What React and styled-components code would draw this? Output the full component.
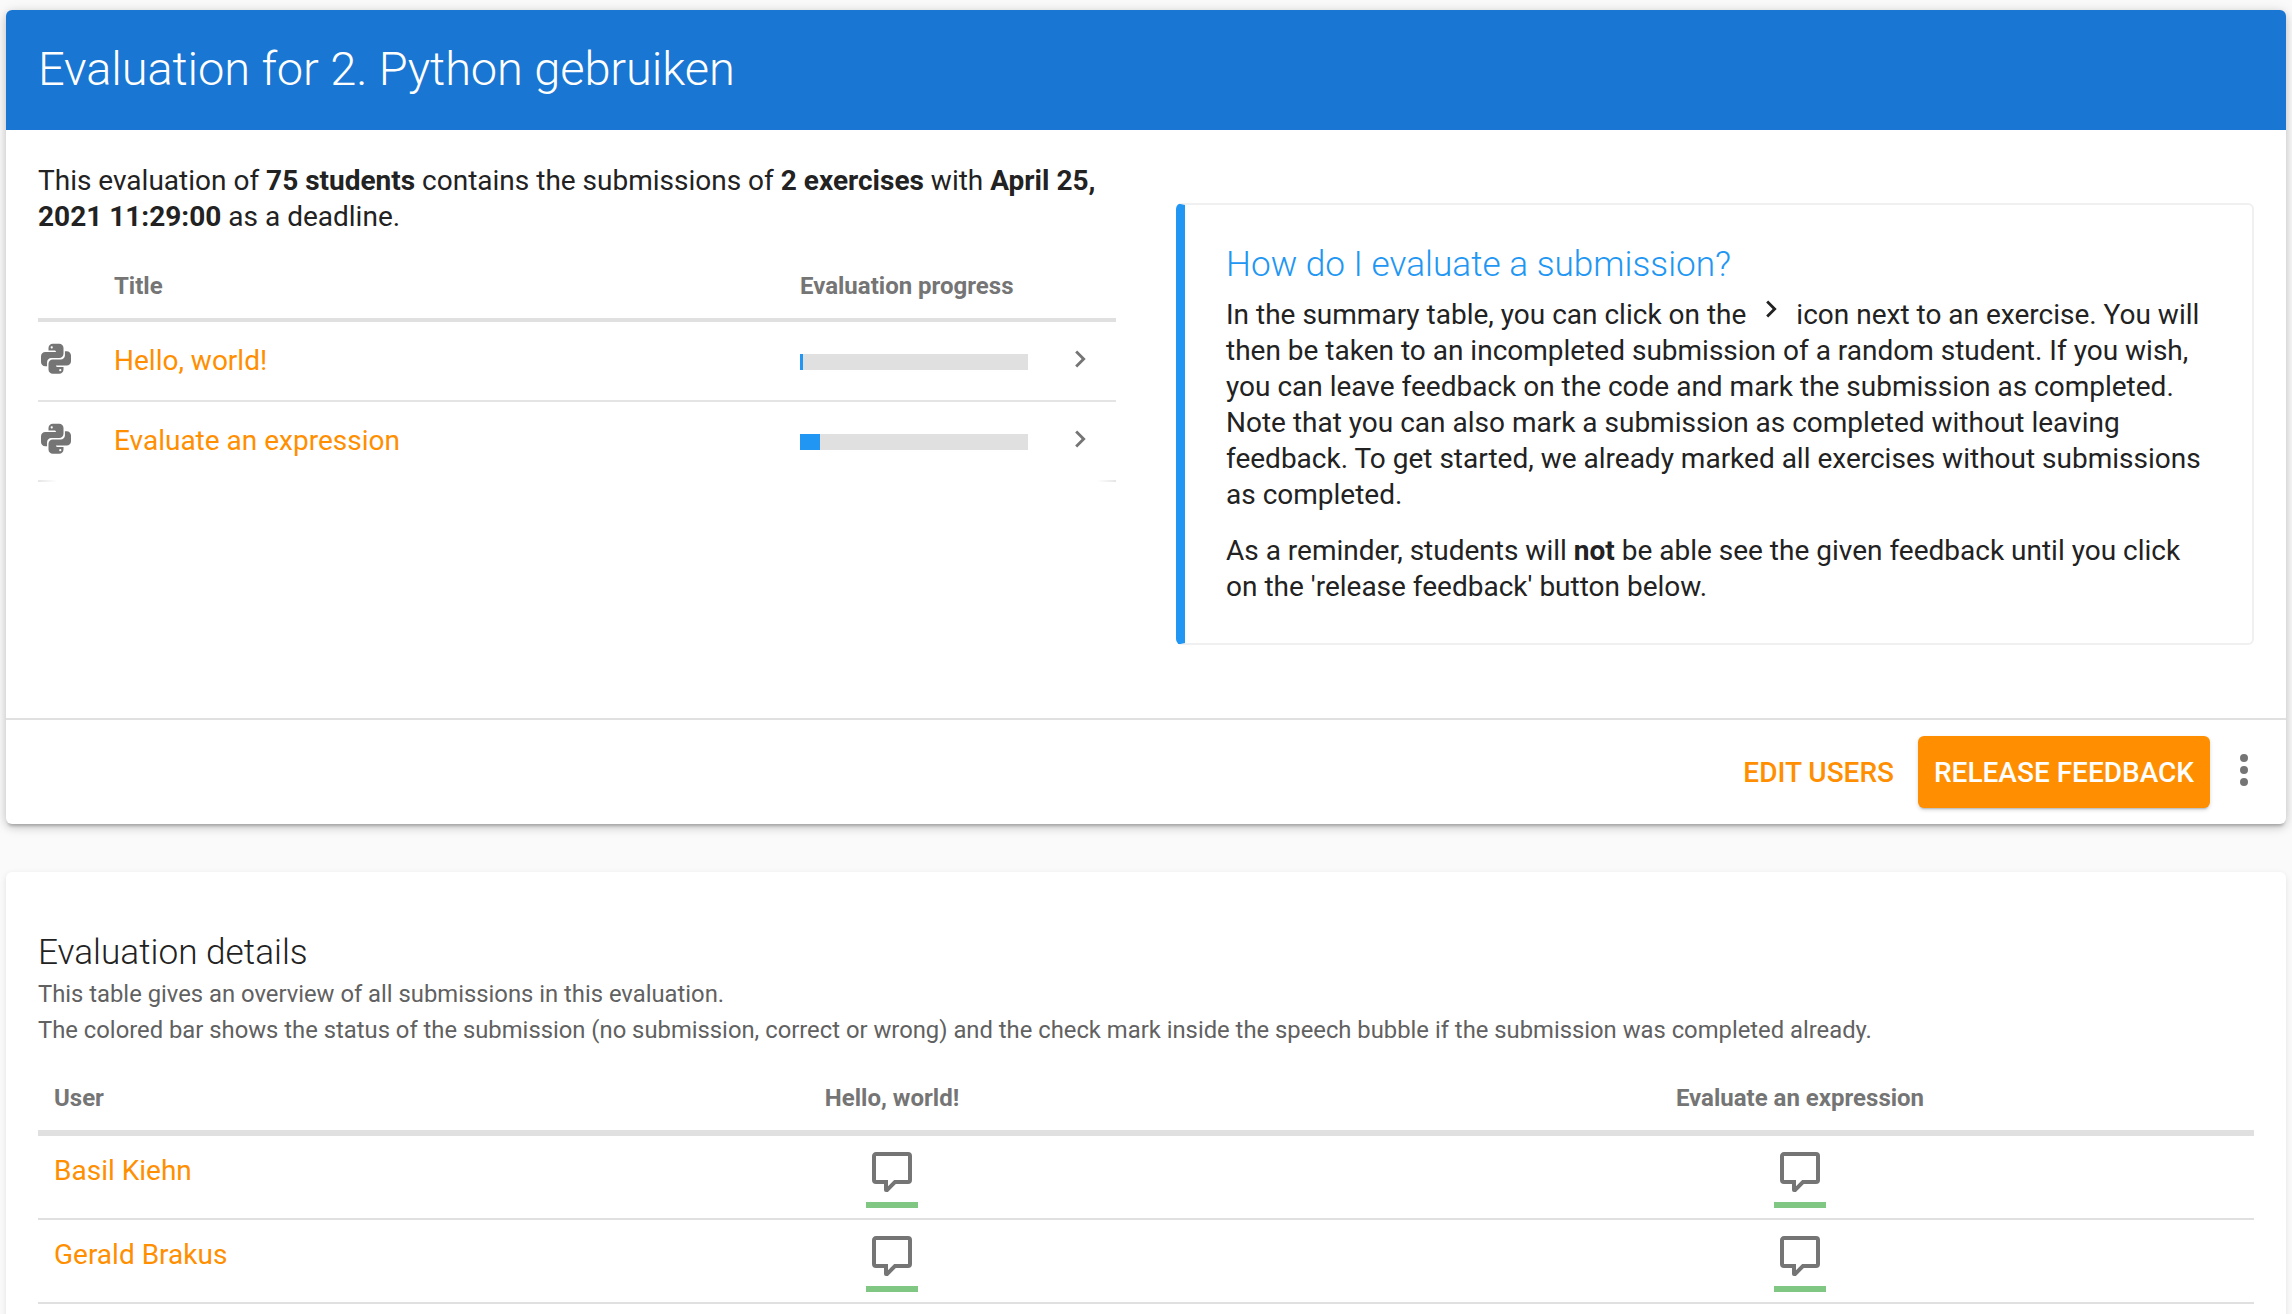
import React from 'react';
import styled, { createGlobalStyle } from 'styled-components';

const PYTHON =
  'M19.14,7.5A2.86,2.86 0 0,1 22,10.36V14.14A2.86,2.86 0 0,1 19.14,17H12C12,17.39 12.32,17.96 12.71,17.96H17V19.64A2.86,2.86 0 0,1 14.14,22.5H9.86A2.86,2.86 0 0,1 7,19.64V15.89C7,14.31 8.28,13.04 9.86,13.04H15.11C16.69,13.04 17.96,11.76 17.96,10.18V7.5H19.14M14.86,19.29C14.46,19.29 14.14,19.59 14.14,20.18C14.14,20.77 14.46,20.89 14.86,20.89A0.71,0.71 0 0,0 15.57,20.18C15.57,19.59 15.25,19.29 14.86,19.29M4.86,17.5C3.28,17.5 2,16.22 2,14.64V10.86C2,9.28 3.28,8 4.86,8H12C12,7.61 11.68,7.04 11.29,7.04H7V5.36C7,3.78 8.28,2.5 9.86,2.5H14.14C15.72,2.5 17,3.78 17,5.36V9.11C17,10.69 15.72,11.96 14.14,11.96H8.89C7.31,11.96 6.04,13.24 6.04,14.82V17.5H4.86M9.14,5.71C9.54,5.71 9.86,5.41 9.86,4.82C9.86,4.23 9.54,4.11 9.14,4.11C8.75,4.11 8.43,4.23 8.43,4.82C8.43,5.41 8.75,5.71 9.14,5.71Z';
const COMMENT =
  'M9,22A1,1 0 0,1 8,21V18H4A2,2 0 0,1 2,16V4C2,2.89 2.9,2 4,2H20A2,2 0 0,1 22,4V16A2,2 0 0,1 20,18H13.9L10.2,21.71C10,21.9 9.75,22 9.5,22V22H9M10,16V19.08L13.08,16H20V4H4V16H10Z';
const CHEVRON = 'M8.59,16.58L13.17,12L8.59,7.41L10,6L16,12L10,18L8.59,16.58Z';
const DOTS =
  'M12,16A2,2 0 0,1 14,18A2,2 0 0,1 12,20A2,2 0 0,1 10,18A2,2 0 0,1 12,16M12,10A2,2 0 0,1 14,12A2,2 0 0,1 12,14A2,2 0 0,1 10,12A2,2 0 0,1 12,10M12,4A2,2 0 0,1 14,6A2,2 0 0,1 12,8A2,2 0 0,1 10,6A2,2 0 0,1 12,4Z';

const Icon = ({ path, size, color, className }) => (
  <svg className={className} width={size} height={size} viewBox="0 0 24 24" fill={color}>
    <path d={path} />
  </svg>
);

const exercises = [
  { title: 'Hello, world!', progress: 3 },
  { title: 'Evaluate an expression', progress: 20 },
];
const users = ['Basil Kiehn', 'Gerald Brakus'];

const App = () => {
  return (
    <>
      <GlobalStyle />
      <Page>
        <Card>
          <Header>Evaluation for 2. Python gebruiken</Header>
          <Body>
            <div>
              <Intro>
                This evaluation of <b>75 students</b> contains the submissions of{' '}
                <b>2 exercises</b> with <b>April 25, 2021 11:29:00</b> as a deadline.
              </Intro>
              <SummaryHead>
                <span />
                <span>Title</span>
                <span>Evaluation progress</span>
              </SummaryHead>
              {exercises.map((ex) => (
                <SummaryRow key={ex.title}>
                  <PythonIcon path={PYTHON} size={36} color="#757575" />
                  <ExerciseLink>{ex.title}</ExerciseLink>
                  <ProgressTrack>
                    <ProgressFill style={{ width: ex.progress }} />
                  </ProgressTrack>
                  <RowChevron path={CHEVRON} size={34} color="#757575" />
                </SummaryRow>
              ))}
            </div>
            <Callout>
              <CalloutTitle>How do I evaluate a submission?</CalloutTitle>
              <CalloutText>
                In the summary table, you can click on the
                <InlineChevron path={CHEVRON} size={34} color="#222222" />
                icon next to an exercise. You will then be taken to an incompleted submission of a
                random student. If you wish, you can leave feedback on the code and mark the
                submission as completed. Note that you can also mark a submission as completed
                without leaving feedback. To get started, we already marked all exercises without
                submissions as completed.
              </CalloutText>
              <CalloutText>
                As a reminder, students will <b>not</b> be able see the given feedback until you
                click on the 'release feedback' button below.
              </CalloutText>
            </Callout>
          </Body>
          <Actions>
            <TextButton>Edit users</TextButton>
            <PrimaryButton>Release feedback</PrimaryButton>
            <MenuIcon path={DOTS} size={48} color="#757575" />
          </Actions>
        </Card>
        <DetailsCard>
          <DetailsTitle>Evaluation details</DetailsTitle>
          <DetailsText>This table gives an overview of all submissions in this evaluation.</DetailsText>
          <DetailsText>
            The colored bar shows the status of the submission (no submission, correct or wrong) and
            the check mark inside the speech bubble if the submission was completed already.
          </DetailsText>
          <DetailsHead>
            <UserHeading>User</UserHeading>
            <span>Hello, world!</span>
            <span>Evaluate an expression</span>
          </DetailsHead>
          {users.map((user) => (
            <DetailsRow key={user}>
              <UserLink>{user}</UserLink>
              {exercises.map((ex) => (
                <StatusCell key={ex.title}>
                  <Icon path={COMMENT} size={48} color="#757575" />
                  <StatusBar />
                </StatusCell>
              ))}
            </DetailsRow>
          ))}
        </DetailsCard>
      </Page>
    </>
  );
};

const GlobalStyle = createGlobalStyle`
  html, body {
    margin: 0;
    height: 1314px;
    overflow: hidden;
    background: #fafafa;
  }
  body {
    font-family: Roboto, 'Liberation Sans', sans-serif;
    color: #222222;
  }
`;
const Page = styled.div`
  padding: 10px 6px 0;
  display: flex;
  flex-direction: column;
  gap: 48px;
`;
const Card = styled.section`
  background: #fff;
  border-radius: 6px;
  overflow: hidden;
  box-shadow: 0 4px 3px -2px rgba(0, 0, 0, 0.2), 0 3px 8px rgba(0, 0, 0, 0.14), 0 2px 14px rgba(0, 0, 0, 0.12);
`;
const Header = styled.h1`
  margin: 0;
  height: 120px;
  padding: 0 32px 3px;
  box-sizing: border-box;
  display: flex;
  align-items: center;
  background: #1976d2;
  color: #fff;
  font-size: 47px;
  font-weight: 300;
  letter-spacing: -0.1px;
`;
const Body = styled.div`
  display: grid;
  grid-template-columns: 1078px 1078px;
  gap: 60px;
  padding: 32px 32px 73px;
  border-bottom: 2px solid #e0e0e0;
`;
const Intro = styled.p`
  margin: 1px 0 19px;
  font-size: 28px;
  line-height: 36px;
  height: 72px;
`;
const SummaryHead = styled.div`
  display: grid;
  grid-template-columns: 76px 686px 1fr;
  align-items: center;
  height: 64px;
  border-bottom: 4px solid #e0e0e0;
  color: #757575;
  font-size: 24px;
  font-weight: 700;
`;
/* last row only shows the rule at its two ends, fading towards the middle */
const SummaryRow = styled.div`
  display: grid;
  grid-template-columns: 76px 686px 228px 1fr;
  align-items: center;
  height: 78px;
  border-bottom: 2px solid #e4e4e4;
  &:last-child {
    border-image: linear-gradient(90deg, #e4e4e4, #fff 20px, #fff calc(100% - 20px), #e4e4e4) 1;
  }
`;
const PythonIcon = styled(Icon)`
  margin-top: -6px;
`;
const ExerciseLink = styled.a`
  margin-top: -2px;
  color: #ff8f00;
  font-size: 28px;
`;
const ProgressTrack = styled.div`
  height: 16px;
  margin-top: 2px;
  background: #e0e0e0;
`;
const ProgressFill = styled.div`
  height: 100%;
  background: #2196f3;
`;
const RowChevron = styled(Icon)`
  margin: -4px 0 0 35px;
`;
const Callout = styled.aside`
  margin-top: 41px;
  height: 442px;
  box-sizing: border-box;
  padding: 35px 40px 0 41px;
  border: 2px solid #f0f0f0;
  border-left: 9px solid #2196f3;
  border-radius: 6px;
`;
const CalloutTitle = styled.h2`
  margin: 0 0 4px;
  color: #2196f3;
  font-size: 35.2px;
  font-weight: 300;
  line-height: 48px;
`;
const CalloutText = styled.p`
  margin: 0 0 20px;
  font-size: 28px;
  line-height: 36px;
`;
const InlineChevron = styled(Icon)`
  margin: 0 8px;
  vertical-align: -2px;
`;
const Actions = styled.div`
  display: flex;
  justify-content: flex-end;
  align-items: center;
  height: 104px;
  padding-right: 18px;
`;
const TextButton = styled.button`
  border: 0;
  padding: 0;
  margin-right: 24px;
  background: none;
  color: #ff8f00;
  font: 500 28px Roboto, sans-serif;
  text-transform: uppercase;
`;
const PrimaryButton = styled.button`
  width: 292px;
  height: 72px;
  margin-right: 10px;
  padding: 0;
  border: 0;
  border-radius: 6px;
  background: #ff8f00;
  color: #fff;
  font: 500 28px Roboto, sans-serif;
  text-transform: uppercase;
  box-shadow: 0 3px 2px -2px rgba(0, 0, 0, 0.2), 0 2px 4px rgba(0, 0, 0, 0.14);
`;
const MenuIcon = styled(Icon)`
  margin-top: -4px;
`;
const DetailsCard = styled.section`
  padding: 56px 32px 40px;
  background: #fff;
  border-radius: 6px;
  box-shadow: 0 2px 6px rgba(0, 0, 0, 0.1);
`;
const DetailsTitle = styled.h2`
  margin: 0;
  font-size: 35.2px;
  font-weight: 300;
  line-height: 48px;
`;
const DetailsText = styled.p`
  margin: 0;
  color: #616161;
  font-size: 23.8px;
  line-height: 36px;
`;
const DetailsHead = styled.div`
  display: grid;
  grid-template-columns: 400px 1fr 1fr;
  align-items: center;
  height: 64px;
  margin-top: 18px;
  border-bottom: 6px solid #e0e0e0;
  color: #757575;
  font-size: 24px;
  font-weight: 700;
  text-align: center;
`;
const UserHeading = styled.span`
  padding-left: 16px;
  text-align: left;
`;
const DetailsRow = styled.div`
  display: grid;
  grid-template-columns: 400px 1fr 1fr;
  height: 84px;
  box-sizing: border-box;
  padding-top: 12px;
  border-bottom: 2px solid #e0e0e0;
`;
const UserLink = styled.a`
  padding: 6px 0 0 16px;
  color: #ff8f00;
  font-size: 28px;
`;
const StatusCell = styled.div`
  display: flex;
  flex-direction: column;
  align-items: center;
  gap: 6px;
`;
const StatusBar = styled.div`
  width: 52px;
  height: 6px;
  background: #81c784;
`;

export default App;
